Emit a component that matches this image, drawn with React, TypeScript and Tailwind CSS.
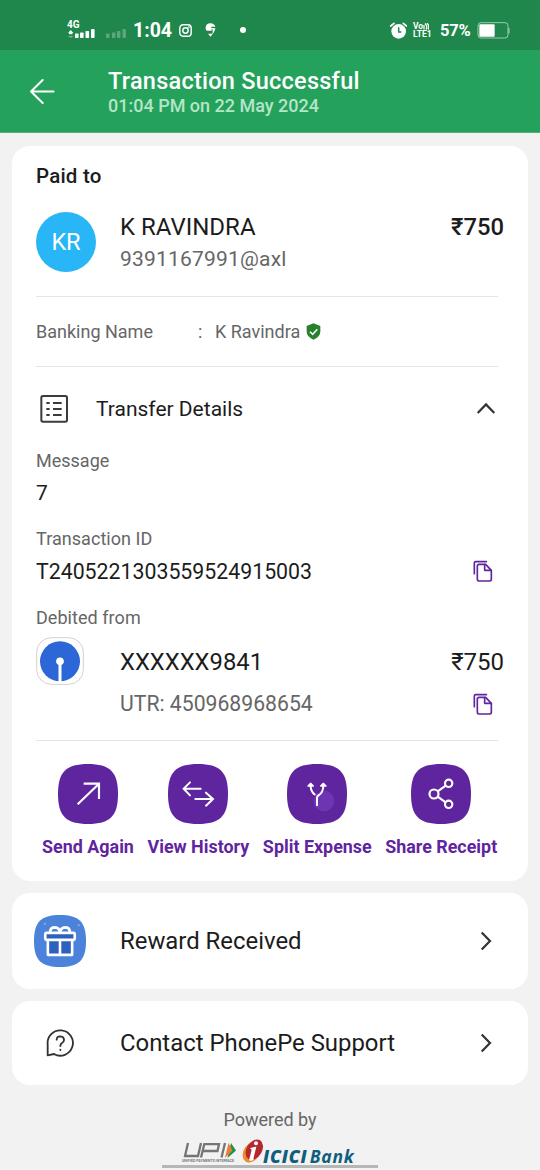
import type { ReactNode } from "react";

function Squircle({ color, className, children }: { color: string; className: string; children: ReactNode }) {
  return (
    <svg viewBox="0 0 180 180" className={className} fill="none" aria-hidden="true">
      <path d="M90 0C156 0 180 24 180 90S156 180 90 180 0 156 0 90 24 0 90 0Z" fill={color} />
      {children}
    </svg>
  );
}

function CopyIcon() {
  return (
    <svg viewBox="0 0 60 66" className="h-[22px] w-5" fill="none" stroke="#5f259f" strokeWidth="5" strokeLinejoin="round" strokeLinecap="round" aria-hidden="true">
      <path d="M4 41V9Q4 5 8 5H40" />
      <path d="M18 13H38L55 31V58Q55 63 50 63H18Q13 63 13 58V18Q13 13 18 13Z" />
      <path d="M35 14V31H54" />
    </svg>
  );
}

function ListIcon() {
  return (
    <svg viewBox="0 0 84 84" className="size-7" fill="none" stroke="#3b3b3b" strokeWidth="6" aria-hidden="true">
      <rect x="4" y="3" width="77" height="77" rx="5" />
      <path d="M19 24h10M19 42h10M19 60h10M39 24h26M39 42h26M39 60h26" />
    </svg>
  );
}

function Chevron({ up = false }: { up?: boolean }) {
  return (
    <svg viewBox="0 0 20 20" className="size-5" fill="none" stroke="#333" strokeWidth="2.200" aria-hidden="true">
      {up ? <path d="M1.700 14 10 5.400l8.300 8.600" /> : <path d="M5.700 1.600 14 10l-8.300 8.400" />}
    </svg>
  );
}

function StatusBar() {
  return (
    <div className="flex h-[50px] items-center bg-[#1f874c] pt-[10px] pr-[30px] pl-[67px] text-white">
      <div className="flex w-[29px] flex-col">
        <span className="h-[9px] text-[10px] leading-[9px] font-bold">4G</span>
        <svg viewBox="0 0 29 11" className="h-[11px] w-[29px]" fill="white" aria-hidden="true">
          <path d="M1 4 3.700 1 6.400 4Z" />
          <path d="M2 4h3.400v1.200H2z" />
          <path d="M1 7 3.700 9 6.400 7Z" opacity=".4" />
          <rect x="8" y="4.500" width="3.600" height="4.500" rx=".8" />
          <rect x="13" y="3.500" width="3.600" height="5.500" rx=".8" />
          <rect x="18.500" y="2" width="3.600" height="7" rx=".8" />
          <rect x="24" y="0" width="3.600" height="9" rx=".8" />
        </svg>
      </div>
      <svg viewBox="0 0 20 11" className="mt-[9px] ml-[10px] h-[11px] w-5" fill="white" opacity=".27" aria-hidden="true">
        <rect x="0" y="4.500" width="3.400" height="4.500" rx=".8" />
        <rect x="6" y="3.500" width="3.400" height="5.500" rx=".8" />
        <rect x="11" y="2" width="3.400" height="7" rx=".8" />
        <rect x="16.500" y="0" width="3.400" height="9" rx=".8" />
      </svg>
      <span className="mt-px ml-[7px] w-[38px] text-[19.500px] leading-5 font-bold whitespace-nowrap">1:04</span>
      <svg viewBox="0 0 24 24" className="ml-2 size-[13px]" fill="none" stroke="white" strokeWidth="2.600" aria-hidden="true">
        <rect x="1.500" y="1.500" width="21" height="21" rx="6" />
        <circle cx="12" cy="12" r="5" />
        <circle cx="18" cy="6" r=".6" />
      </svg>
      <svg viewBox="0 0 30 40" className="ml-[13px] h-[14px] w-[11px]" fill="white" aria-hidden="true">
        <path d="M15 1C6 1 1 7 1 14c0 4 2 7 4 8h13v-4h3v10c0 2-1 3-3 3H8l7 8C22 31 28 23 29 15l-12-1v-3h12C27 5 22 1 15 1Z" />
      </svg>
      <span className="ml-6 size-[6px] rounded-full bg-white" />
      <div className="ml-auto flex items-center">
        <svg viewBox="0 0 51 51" className="size-[17px]" fill="none" aria-hidden="true">
          <circle cx="26" cy="28" r="22" fill="white" />
          <path d="M2 12 12 4M50 12 40 4" stroke="white" strokeWidth="5" strokeLinecap="round" />
          <path d="M26 16V30H34" stroke="#1f874c" strokeWidth="4.500" />
        </svg>
        <div className="ml-[6px] flex w-5 flex-col text-[8.500px] leading-[8px] font-bold">
          <span className="flex h-2 items-center">
            Vo
            <svg viewBox="0 0 12 14" className="h-[7px] w-[6px]" fill="none" stroke="white" strokeWidth="2.500" aria-hidden="true">
              <path d="M2 4v9M4 1q6 6 2 12M8 0q6 7 2 13" />
            </svg>
          </span>
          <span className="h-2">LTE1</span>
        </div>
        <span className="mt-[2px] ml-[7px] w-[31px] text-[16.500px] leading-5 font-bold tracking-[-0.2px]">57%</span>
        <svg viewBox="0 0 99 51" className="ml-[6px] h-[17px] w-[33px]" fill="none" aria-hidden="true">
          <rect x="3" y="2" width="90" height="46" rx="9" stroke="white" strokeOpacity=".55" strokeWidth="3" />
          <path d="M96 18v16" stroke="white" strokeOpacity=".6" strokeWidth="3" />
          <rect x="7" y="7" width="46" height="37" rx="3" fill="white" />
        </svg>
      </div>
    </div>
  );
}

function Header() {
  return (
    <header className="flex h-[83px] items-center border-b border-[#4fb07b] bg-[#24a25c]">
      <svg viewBox="0 0 26 28" className="ml-[29px] h-7 w-[26px]" fill="none" stroke="white" strokeWidth="2" strokeLinecap="round" strokeLinejoin="round" aria-hidden="true">
        <path d="M24.500 14.500H2M13.700 3 2 14.500l11.700 11.500" />
      </svg>
      <div className="ml-[53px] pt-1">
        <h1 className="h-[25px] text-[23.500px] leading-[25px] font-medium tracking-[0.25px] text-white">Transaction Successful</h1>
        <p className="h-[23px] text-[18px] leading-[23px] font-medium text-[#b5e5c8]">01:04 PM on 22 May 2024</p>
      </div>
    </header>
  );
}

function Divider({ className = "" }: { className?: string }) {
  return <div className={`mr-[30px] ml-6 h-px shrink-0 bg-[#e5e5e5] ${className}`} />;
}

const actions = [
  {
    label: "Send Again",
    width: "w-[92px]",
    icon: <path d="M59 121 123 59M77 59h46v46" stroke="white" strokeWidth="6.500" />,
  },
  {
    label: "View History",
    width: "w-[102px]",
    icon: (
      <path d="M98 74H47M66 55 47 74l19 20M82 105h53M114 86l21 19-21 20" stroke="white" strokeWidth="6" strokeLinecap="round" />
    ),
  },
  {
    label: "Split Expense",
    width: "w-[109px]",
    icon: (
      <>
        <circle cx="111" cy="111" r="31" fill="#6e35b3" />
        <path d="M90 124V101Q90 96 96 93Q108 86 109 66M71 64Q71 84 83 91" stroke="white" strokeWidth="6" strokeLinecap="round" />
        <path d="M63 66 71 58l8 8ZM101 66l8-8 8 8Z" fill="white" stroke="white" strokeWidth="4" strokeLinecap="round" strokeLinejoin="round" />
      </>
    ),
  },
  {
    label: "Share Receipt",
    width: "w-[112px]",
    icon: (
      <g stroke="white" strokeWidth="6.500">
        <circle cx="69" cy="90" r="13.500" />
        <circle cx="113" cy="58" r="11" />
        <circle cx="113" cy="121" r="11" />
        <path d="M80 82 104 65M80 98l24 17" />
      </g>
    ),
  },
];

function ReceiptCard() {
  return (
    <section className="flex h-[735px] flex-col rounded-[18px] bg-white pt-[14px]">
      <h2 className="ml-6 h-8 text-[20.500px] leading-[33px] font-medium tracking-[0.2px]">Paid to</h2>
      <div className="mx-6 mt-5 flex h-[60px]">
        <div className="flex size-[60px] items-center justify-center rounded-full bg-[#29b6f6] pt-[2px] text-[23.500px] text-white">KR</div>
        <div className="ml-6 flex-1">
          <div className="h-7 text-[24px] leading-[30px]">K RAVINDRA</div>
          <div className="mt-[6px] h-[26px] text-[21px] leading-[27px] tracking-[0.2px] text-[#666]">9391167991@axl</div>
        </div>
        <div className="h-7 text-[23.800px] leading-[30px] font-medium">₹750</div>
      </div>
      <Divider className="mt-6" />
      <div className="ml-6 flex h-[69px] items-center text-[18px] text-[#666]">
        <span className="w-[162px]">Banking Name</span>
        <span className="w-[17px]">:</span>
        <span>K Ravindra</span>
        <svg viewBox="0 0 45 51" className="ml-[6px] h-[17px] w-[15px]" fill="none" aria-hidden="true">
          <path d="M22.500 1 43 9V25Q43 42 22.500 50 2 42 2 25V9Z" fill="#26802c" />
          <path d="m12 26 8 8 14-15" stroke="white" strokeWidth="4.500" />
        </svg>
      </div>
      <Divider />
      <div className="mr-8 ml-7 flex h-[83px] items-center">
        <ListIcon />
        <span className="ml-7 flex-1 pt-[2px] text-[21px]">Transfer Details</span>
        <Chevron up />
      </div>
      <div className="mr-[35px] ml-6">
        <div className="h-[22px] text-[18px] leading-[22px] text-[#666]">Message</div>
        <div className="mt-[9px] h-[25px] text-[21px] leading-[25px]">7</div>
        <div className="mt-[22px] h-[22px] text-[18px] leading-[22px] tracking-[0.05px] text-[#666]">Transaction ID</div>
        <div className="mt-2 flex h-[26px] items-center justify-between">
          <span className="pt-px text-[21.300px] leading-[26px]">T2405221303559524915003</span>
          <CopyIcon />
        </div>
        <div className="mt-[23px] h-[22px] text-[18px] leading-[22px] tracking-[0.05px] text-[#666]">Debited from</div>
      </div>
      <div className="mx-6 mt-2 flex h-12 items-center">
        <svg viewBox="0 0 144 144" className="size-12" aria-hidden="true">
          <rect x="2" y="2" width="140" height="140" rx="44" fill="white" stroke="#d2d2d2" strokeWidth="3" />
          <circle cx="72" cy="73" r="60" fill="#2d66d6" />
          <circle cx="72" cy="73" r="11.500" fill="white" />
          <path d="M67.500 76h9v60h-9z" fill="white" />
        </svg>
        <span className="ml-9 flex-1 pt-[3px] text-[23.800px]">XXXXXX9841</span>
        <span className="pt-[2px] text-[24px]">₹750</span>
      </div>
      <div className="mt-[6px] mr-[35px] ml-[108px] flex h-[26px] items-center justify-between">
        <span className="text-[21.200px] leading-[26px] text-[#666]">UTR: 450968968654</span>
        <CopyIcon />
      </div>
      <Divider className="mt-[23px]" />
      <div className="mt-[23px] ml-[30px] flex gap-[13.400px]">
        {actions.map((action) => (
          <button key={action.label} className={`flex flex-col items-center ${action.width}`}>
            <Squircle color="#5f259f" className="size-[60px]">{action.icon}</Squircle>
            <span className="mt-3 h-[21px] text-[17.900px] leading-[21px] font-bold whitespace-nowrap text-[#5f259f]">{action.label}</span>
          </button>
        ))}
      </div>
    </section>
  );
}

function UpiLogo() {
  return (
    <div className="w-[56px]">
      <div className="flex h-[17px] items-center">
        <svg viewBox="0 0 56 17" className="h-[17px] w-[56px]" fill="none" aria-label="UPI">
          <g stroke="#737578" strokeWidth="2.300">
            <path d="M6 1 3 14H16L19 1" />
            <path d="M19 15.500 22.300 2.200H37L35.500 9H21.500" />
            <path d="M43 1 39.500 15.500" />
          </g>
          <path d="m49 1 5 7.500L45.500 16Z" fill="#1b9350" />
          <path d="m46.500 1 4 7.500L43 16Z" fill="#ee7d2b" />
        </svg>
      </div>
      <div className="h-[4px] w-[52px] text-[3.600px] leading-[4px] font-bold whitespace-nowrap text-[#777]">UNIFIED PAYMENTS INTERFACE</div>
    </div>
  );
}

function IciciLogo() {
  return (
    <div className="ml-[4px] flex h-6 items-end">
      <svg viewBox="0 0 66 72" className="h-6 w-[22px] shrink-0" aria-hidden="true">
        <ellipse cx="29" cy="39" rx="24" ry="34" transform="rotate(32 29 39)" fill="#f0892b" />
        <ellipse cx="37" cy="32" rx="23" ry="33" transform="rotate(32 37 32)" fill="#b3292f" />
        <circle cx="42" cy="13" r="6" fill="white" />
        <path d="M24 28q10-5 19-5L36 52q-2 7-1 11-9 4-14 1l8-32Z" fill="white" />
      </svg>
      <span className="-ml-px h-[15px] text-[17.500px] leading-[17px] font-extrabold tracking-[0.75px] whitespace-nowrap text-[#105d7c] italic [font-family:'Open_Sans',sans-serif]">
        ICICI <span className="-ml-[3px] font-bold">Bank</span>
      </span>
    </div>
  );
}

export default function App() {
  return (
    <div className="flex h-[1170px] w-[540px] flex-col overflow-hidden bg-[#f2f2f2] text-[#1c1c1c] [font-family:Roboto,sans-serif]">
      <StatusBar />
      <Header />
      <main className="mx-3 mt-[13px] flex flex-col gap-3">
        <ReceiptCard />
        <section className="flex h-24 items-center rounded-[18px] bg-white pr-8 pl-[22px]">
          <Squircle color="#4b83db" className="size-[52px]">
            <path d="M50 86h80v52H50z" fill="#2d61c0" />
            <path d="M39 64h102v20H39z" fill="#2d61c0" />
            <g stroke="white" strokeWidth="9" strokeLinejoin="round">
              <rect x="39" y="62" width="102" height="24" rx="4" />
              <path d="M48 88v50h84V88M90 88v50M56 61Q55 44 71 43 89 43 89 61M91 61q0-18 18-18 16 1 15 18" />
            </g>
            <path d="M38 27v8M34 31h8M155 31v8M151 35h8" stroke="#91b2ea" strokeWidth="3" />
          </Squircle>
          <span className="ml-[34px] flex-1 pt-px text-[23.900px]">Reward Received</span>
          <Chevron />
        </section>
        <section className="flex h-[84px] items-center rounded-[18px] bg-white pr-8 pl-[34px]">
          <svg viewBox="0 0 84 84" className="size-7" fill="none" stroke="#333" strokeWidth="5.500" strokeLinecap="round" strokeLinejoin="round" aria-hidden="true">
            <path d="M5 79V46A38 38 0 1 1 24 75Z" />
            <path d="M32 32Q32 22 43 22 54 23 54 33 54 39 48 42 43 45 43 51" />
            <path d="M43 62v1" />
          </svg>
          <span className="ml-[46px] flex-1 pt-px text-[23.900px]">Contact PhonePe Support</span>
          <Chevron />
        </section>
      </main>
      <footer className="flex flex-1 flex-col items-center pt-[23px]">
        <span className="h-[23px] text-[18px] leading-[23px] text-[#666]">Powered by</span>
        <div className="mt-[7px] flex h-[25px] w-[176px] items-end">
          <UpiLogo />
          <IciciLogo />
        </div>
        <div className="mt-[2px] h-[3px] w-[216px] shrink-0 bg-[#b7b7b7]" />
      </footer>
    </div>
  );
}
